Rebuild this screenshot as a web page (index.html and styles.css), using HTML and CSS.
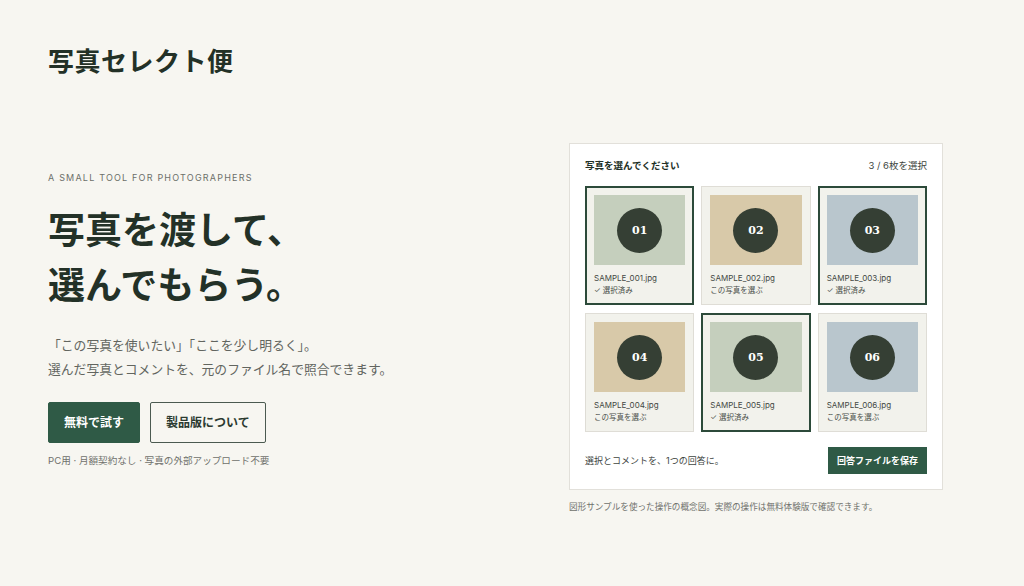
FILE: index.html
```html
<!DOCTYPE html>
<html lang="ja">
<head>
    <meta charset="UTF-8">
    <meta name="viewport" content="width=device-width, initial-scale=1.0">
    <title>写真セレクト便</title>
    <link rel="stylesheet" href="styles.css">
</head>
<body>

    <header class="site-header">
        <div class="logo">写真セレクト便</div>
    </header>

    <main class="hero">
        <section class="hero-text">
            <p class="eyebrow">A SMALL TOOL FOR PHOTOGRAPHERS</p>
            <h1 class="headline">写真を渡して、<br>選んでもらう。</h1>
            <p class="lead">「この写真を使いたい」「ここを少し明るく」。<br>
                選んだ写真とコメントを、元のファイル名で照合できます。</p>
            <div class="actions">
                <a class="btn btn-primary" href="#">無料で試す</a>
                <a class="btn btn-outline" href="#">製品版について</a>
            </div>
            <p class="note">PC用 · 月額契約なし · 写真の外部アップロード不要</p>
        </section>

        <section class="demo">
            <div class="card">
                <div class="card-head">
                    <span class="card-title">写真を選んでください</span>
                    <span class="card-count">3 / 6枚を選択</span>
                </div>

                <div class="grid">
                    <div class="tile selected">
                        <div class="thumb sage"><span class="num">01</span></div>
                        <div class="fname">SAMPLE_001.jpg</div>
                        <div class="status">✓ 選択済み</div>
                    </div>
                    <div class="tile">
                        <div class="thumb sand"><span class="num">02</span></div>
                        <div class="fname">SAMPLE_002.jpg</div>
                        <div class="status">この写真を選ぶ</div>
                    </div>
                    <div class="tile selected">
                        <div class="thumb mist"><span class="num">03</span></div>
                        <div class="fname">SAMPLE_003.jpg</div>
                        <div class="status">✓ 選択済み</div>
                    </div>
                    <div class="tile">
                        <div class="thumb sand"><span class="num">04</span></div>
                        <div class="fname">SAMPLE_004.jpg</div>
                        <div class="status">この写真を選ぶ</div>
                    </div>
                    <div class="tile selected">
                        <div class="thumb sage"><span class="num">05</span></div>
                        <div class="fname">SAMPLE_005.jpg</div>
                        <div class="status">✓ 選択済み</div>
                    </div>
                    <div class="tile">
                        <div class="thumb mist"><span class="num">06</span></div>
                        <div class="fname">SAMPLE_006.jpg</div>
                        <div class="status">この写真を選ぶ</div>
                    </div>
                </div>

                <div class="card-foot">
                    <span class="foot-text">選択とコメントを、1つの回答に。</span>
                    <a class="btn-save" href="#">回答ファイルを保存</a>
                </div>
            </div>
            <p class="caption">図形サンプルを使った操作の概念図。実際の操作は無料体験版で確認できます。</p>
        </section>
    </main>

</body>
</html>
```

FILE: styles.css
```css
body {
    margin: 0;
    background-color: #f7f6f1;
    color: #233127;
    font-family: Inter, "Noto Sans CJK JP", sans-serif;
}

a {
    text-decoration: none;
}

.site-header {
    padding: 44px 48px 0;
}

.logo {
    font-size: 26px;
    line-height: 36px;
    font-weight: 700;
    letter-spacing: 0.02em;
}

.hero {
    display: flex;
    justify-content: space-between;
    align-items: flex-start;
    padding: 63px 81px 0 48px;
}

.hero-text {
    padding-top: 28px;
}

.eyebrow {
    margin: 0;
    font-size: 9px;
    line-height: 14px;
    letter-spacing: 1.2px;
    color: #6c6f69;
}

.headline {
    margin: 18px 0 0;
    font-size: 37px;
    line-height: 55px;
    font-weight: 700;
}

.lead {
    margin: 21px 0 0;
    font-size: 12.8px;
    line-height: 24px;
    color: #62655f;
}

.actions {
    display: flex;
    gap: 10px;
    margin-top: 20px;
}

.btn {
    display: block;
    padding: 0 15px;
    height: 41px;
    line-height: 39px;
    font-size: 12px;
    font-weight: 700;
    border: 1px solid transparent;
    border-radius: 2px;
    box-sizing: border-box;
}

.btn-primary {
    background-color: #2f5a46;
    border-color: #2f5a46;
    color: #fff;
}

.btn-outline {
    border-color: #4b5a50;
    color: #2b3a30;
}

.note {
    margin: 10px 0 0;
    font-size: 9.6px;
    line-height: 16px;
    color: #6f716c;
}

/* demo card */

.demo {
    width: 374px;
}

.card {
    background-color: #fff;
    border: 1px solid #e2e0da;
    padding: 14px 15px 15px;
}

.card-head {
    display: flex;
    justify-content: space-between;
    font-size: 9.5px;
    line-height: 16px;
}

.card-title {
    font-weight: 700;
}

.card-count {
    color: #3d4640;
}

.grid {
    display: grid;
    grid-template-columns: repeat(3, 1fr);
    column-gap: 7px;
    row-gap: 8px;
    margin-top: 12px;
}

.tile {
    background-color: #f2f2ec;
    border: 1px solid #dfddd6;
    padding: 8px 8px 7px;
}

.tile.selected {
    border: 2px solid #2c4a3a;
    padding: 7px 7px 6px;
}

.thumb {
    height: 70px;
    display: flex;
    align-items: center;
    justify-content: center;
}

.sage { background-color: #c5cfbd; }
.sand { background-color: #d8c9a9; }
.mist { background-color: #b9c6cd; }

.num {
    width: 45px;
    height: 45px;
    border-radius: 50%;
    background-color: #353f34;
    color: #fff;
    display: flex;
    align-items: center;
    justify-content: center;
    font-family: "DejaVu Serif", serif;
    font-size: 11px;
    font-weight: 700;
}

.fname {
    margin-top: 7px;
    font-size: 8px;
    line-height: 12px;
    color: #434843;
}

.status {
    font-size: 7.5px;
    line-height: 13px;
    color: #4a4f4a;
}

.card-foot {
    display: flex;
    justify-content: space-between;
    align-items: center;
    margin-top: 15px;
}

.foot-text {
    font-size: 9px;
    color: #3e463f;
}

.btn-save {
    display: block;
    height: 27px;
    line-height: 27px;
    padding: 0 9px;
    background-color: #2f5a46;
    color: #fff;
    font-size: 9px;
    font-weight: 700;
}

.caption {
    margin: 11px 0 0;
    font-size: 8.6px;
    line-height: 12px;
    color: #6f716c;
}
```
